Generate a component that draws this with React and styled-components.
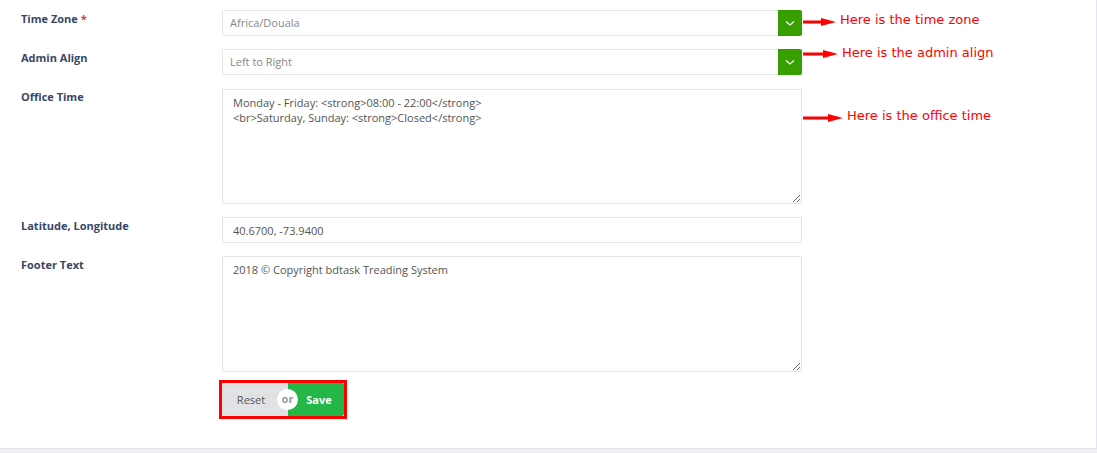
import React from "react";
import styled, { createGlobalStyle } from "styled-components";

const GlobalStyle = createGlobalStyle`
  html, body {
    margin: 0;
    padding: 0;
    background: #eef0f6;
  }
  * {
    box-sizing: border-box;
  }
`;

const Panel = styled.div`
  position: relative;
  width: 1097px;
  height: 449px;
  background: #fff;
  border-right: 1px solid #e3e4ec;
  border-bottom: 1px solid #e3e4ec;
  padding: 10px 0 0 21px;
  font-family: "Open Sans", sans-serif;
`;

const Form = styled.div`
  display: grid;
  grid-template-columns: 201px 580px;
  row-gap: 13px;
`;

const Label = styled.label`
  font-size: 11px;
  font-weight: 700;
  color: #374767;
  padding-top: 1px;
  line-height: 15px;
  span {
    color: #e5343d;
  }
`;

const SelectWrap = styled.div`
  display: flex;
  height: 26px;
`;

const Select = styled.div`
  flex: 1;
  border: 1px solid #e4e5e7;
  border-right: none;
  border-radius: 2px 0 0 2px;
  font-size: 11px;
  color: #888;
  padding: 0 0 0 7px;
  line-height: 24px;
`;

const Addon = styled.div`
  width: 24px;
  background: #37a000;
  border-radius: 0 2px 2px 0;
  display: flex;
  align-items: center;
  justify-content: center;
`;

const Input = styled.input`
  height: 26px;
  border: 1px solid #e4e5e7;
  font-family: "Open Sans", sans-serif;
  font-size: 11px;
  color: #555;
  padding: 0 10px;
  outline: none;
`;

const TextArea = styled.textarea`
  height: ${(p) => 116 - (p.shift || 0)}px;
  margin-top: ${(p) => p.shift || 0}px;
  border: 1px solid #e4e5e7;
  font-family: "Open Sans", sans-serif;
  font-size: 11px;
  line-height: 15px;
  color: #555;
  padding: 5px 10px;
  outline: none;
  resize: vertical;
`;

const Actions = styled.div`
  grid-column: 2;
  margin: -5px 0 0 -3px;
`;

const Highlight = styled.div`
  display: inline-flex;
  border: 3px solid #ff0000;
`;

const Group = styled.div`
  position: relative;
  display: flex;
  height: 33px;
`;

const Button = styled.button`
  border: none;
  height: 33px;
  width: ${(p) => p.width}px;
  background: ${(p) => p.bg};
  color: ${(p) => p.color};
  font-family: "Open Sans", sans-serif;
  font-size: 11px;
  font-weight: ${(p) => p.weight};
  border-radius: ${(p) => p.radius};
  padding: ${(p) => p.pad};
`;

const Or = styled.span`
  position: absolute;
  left: 55px;
  top: 6px;
  width: 21px;
  height: 21px;
  border-radius: 50%;
  background: #fff;
  color: #999;
  font-size: 11px;
  font-weight: 700;
  text-align: center;
  line-height: 20px;
`;

const Note = styled.div`
  position: absolute;
  left: ${(p) => p.x}px;
  top: ${(p) => p.y}px;
  display: flex;
  align-items: center;
  gap: 4px;
  color: #ff0000;
  font-family: "DejaVu Sans", sans-serif;
  font-size: 13px;
  white-space: nowrap;
  svg {
    position: relative;
    top: ${(p) => p.dy}px;
  }
`;

const Chevron = () => (
  <svg width="12" height="12" viewBox="0 0 12 12">
    <path d="M2 4.5 L6 8 L10 4.5" fill="none" stroke="#fff" strokeWidth="1.1" />
  </svg>
);

const Arrow = ({ len }) => (
  <svg width={len} height="10" viewBox={`0 0 ${len} 10`}>
    <rect x="0" y="3.5" width={len - 12} height="3" fill="#ff0000" />
    <path d={`M${len - 15} 1 L${len} 5 L${len - 15} 9 Z`} fill="#ff0000" />
  </svg>
);

const notes = [
  { x: 803, y: 12, dy: 2, len: 33, text: "Here is the time zone" },
  { x: 803, y: 45, dy: 1, len: 35, text: "Here is the admin align" },
  { x: 803, y: 108, dy: 2, len: 40, text: "Here is the office time" },
];

export default function App() {
  return (
    <>
      <GlobalStyle />
      <Panel>
        <Form>
          <Label>
            Time Zone <span>*</span>
          </Label>
          <SelectWrap>
            <Select>Africa/Douala</Select>
            <Addon>
              <Chevron />
            </Addon>
          </SelectWrap>

          <Label>Admin Align</Label>
          <SelectWrap>
            <Select>Left to Right</Select>
            <Addon>
              <Chevron />
            </Addon>
          </SelectWrap>

          <Label>Office Time</Label>
          <TextArea
            shift={1}
            defaultValue={
              "Monday - Friday: <strong>08:00 - 22:00</strong>\n<br>Saturday, Sunday: <strong>Closed</strong>"
            }
          />

          <Label>Latitude, Longitude</Label>
          <Input defaultValue="40.6700, -73.9400" />

          <Label>Footer Text</Label>
          <TextArea defaultValue="2018 © Copyright bdtask Treading System" />

          <Actions>
            <Highlight>
              <Group>
                <Button width={66} bg="#e1e2e4" color="#555" weight={400} radius="2px 0 0 2px" pad="0 8px 0 0">
                  Reset
                </Button>
                <Button width={56} bg="#22b747" color="#fff" weight={700} radius="0 2px 2px 0" pad="0 0 0 6px">
                  Save
                </Button>
                <Or>or</Or>
              </Group>
            </Highlight>
          </Actions>
        </Form>

        {notes.map((n) => (
          <Note key={n.text} x={n.x} y={n.y} dy={n.dy}>
            <Arrow len={n.len} />
            {n.text}
          </Note>
        ))}
      </Panel>
    </>
  );
}
